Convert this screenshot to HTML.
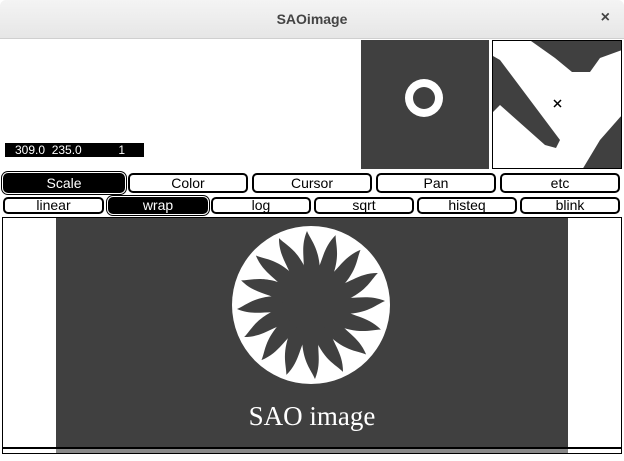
<!DOCTYPE html>
<html><head><style>
body{margin:0;width:624px;height:461px;overflow:hidden;background:#fff;font-family:"Liberation Sans",sans-serif;position:relative}
.tb{position:absolute;left:0;top:0;width:624px;height:38px;background:linear-gradient(#f4f4f4,#e6e6e6);border-bottom:1px solid #cfcfcf;border-radius:6px 6px 0 0}
.tb .t{position:absolute;left:0;right:0;top:11px;text-align:center;font-weight:bold;font-size:14px;color:#444}
.tb .x{position:absolute;right:14px;top:9px;font-weight:bold;font-size:16px;color:#444}
.b{position:absolute;box-sizing:border-box;border:2px solid #000;border-radius:5px;background:#fff;text-align:center;font-size:14px;color:#000;line-height:17px}
.b.on{background:#000;color:#fff;box-shadow:0 0 0 1px #fff,0 0 0 2px #000}
.r1{top:173px;height:20px}
.r2{top:197px;height:17px;line-height:13px}
.dg{background:#404040}
</style></head><body>
<div class="tb"><div class="t">SAOimage</div><div class="x">×</div></div>
<div style="position:absolute;left:5px;top:143px;width:139px;height:14px;background:#000;color:#fff;font-size:12px;line-height:14px;white-space:pre;font-family:'Liberation Sans Narrow','Liberation Sans',sans-serif">   309.0  235.0           1</div>
<div class="dg" style="position:absolute;left:361px;top:40px;width:128px;height:129px"></div>
<svg style="position:absolute;left:361px;top:40px" width="128" height="129"><circle cx="63" cy="58" r="19" fill="#fff"/><circle cx="63" cy="58" r="11" fill="#404040"/></svg>
<div style="position:absolute;left:492px;top:40px;width:130px;height:129px;border:1px solid #000;box-sizing:border-box;overflow:hidden">
<svg width="130" height="129"><g transform="translate(-493,-41)" fill="#404040">
<polygon points="531,41 622,41 622,50 600,58 590,72 572,72 555,58"/>
<polygon points="493,56 500,60 560,140 556,148 545,145 500,105 493,112"/>
<polygon points="622,115 622,170 582,170 600,140"/>
</g><path d="M61,59 l7,7 M68,59 l-7,7" stroke="#000" stroke-width="1.5"/></svg></div>
<div class="b r1 on" style="left:3px;width:122px">Scale</div>
<div class="b r1" style="left:128px;width:120px">Color</div>
<div class="b r1" style="left:252px;width:120px">Cursor</div>
<div class="b r1" style="left:376px;width:120px">Pan</div>
<div class="b r1" style="left:500px;width:120px">etc</div>
<div class="b r2" style="left:3px;width:101px">linear</div>
<div class="b r2 on" style="left:108px;width:100px">wrap</div>
<div class="b r2" style="left:211px;width:100px">log</div>
<div class="b r2" style="left:314px;width:100px">sqrt</div>
<div class="b r2" style="left:417px;width:100px">histeq</div>
<div class="b r2" style="left:520px;width:100px">blink</div>
<div style="position:absolute;left:2px;top:217px;width:620px;height:231px;border:1px solid #000;box-sizing:border-box"></div>
<div class="dg" style="position:absolute;left:56px;top:218px;width:512px;height:229px"></div>
<svg style="position:absolute;left:56px;top:218px" width="512" height="229">
<defs><path id="ray" d="M-9,-26 C-4,-42 -12,-55 -4,-74 C0,-64 10,-56 9,-26 Z" fill="#404040"/></defs>
<circle cx="255" cy="87" r="79" fill="#fff"/>
<g transform="translate(255,87)">
<circle r="32" fill="#404040"/>
<use href="#ray"/><use href="#ray" transform="rotate(22.5)"/><use href="#ray" transform="rotate(45)"/><use href="#ray" transform="rotate(67.5)"/><use href="#ray" transform="rotate(90)"/><use href="#ray" transform="rotate(112.5)"/><use href="#ray" transform="rotate(135)"/><use href="#ray" transform="rotate(157.5)"/><use href="#ray" transform="rotate(180)"/><use href="#ray" transform="rotate(202.5)"/><use href="#ray" transform="rotate(225)"/><use href="#ray" transform="rotate(247.5)"/><use href="#ray" transform="rotate(270)"/><use href="#ray" transform="rotate(292.5)"/><use href="#ray" transform="rotate(315)"/><use href="#ray" transform="rotate(337.5)"/>
</g>
<text x="256" y="207" text-anchor="middle" font-family="Liberation Serif,serif" font-size="27" fill="#fff">SAO image</text>
</svg>
<div style="position:absolute;left:2px;top:448px;width:620px;height:6px;border:1px solid #000;box-sizing:border-box;background:#fff"></div>
<div style="position:absolute;left:56px;top:449px;width:512px;height:4px;background:#888"></div>
</body></html>
